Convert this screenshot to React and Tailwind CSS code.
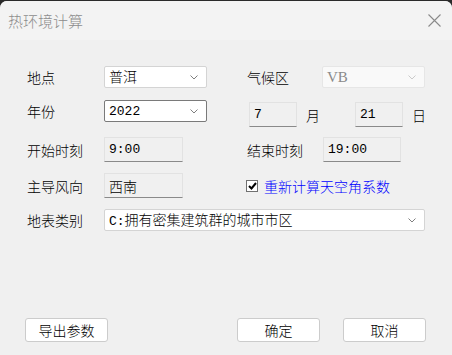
import React from "react";

const mono = { fontFamily: '"Liberation Mono", "Noto Sans CJK SC", monospace' };
const cjk = { fontFamily: '"Noto Sans CJK SC", "Noto Sans", sans-serif', fontWeight: 300 };

const Chevron = ({ color = "#707070" }) => (
  <svg width="8" height="5" viewBox="0 0 8 5" className="shrink-0">
    <path d="M0.5 0.5 L4 4 L7.5 0.5" fill="none" stroke={color} strokeWidth="0.9" />
  </svg>
);

const Combo = ({ value, width, focused, disabled, serif }) => (
  <div
    className={`flex h-[22px] items-center justify-between rounded-[2px] border pl-[4px] pr-[8px] ${
      disabled
        ? "border-[#e6e6e6] bg-[#f9f9f9] text-[#8a8a8a]"
        : focused
        ? "border-[#7a7a7a] bg-white text-black"
        : "border-[#d4d4d4] bg-white text-black"
    }`}
    style={{ width }}
  >
    <span
      className="text-[13px] leading-none"
      style={serif ? { fontFamily: '"Liberation Serif", serif', fontSize: 15 } : mono}
    >
      {value}
    </span>
    <Chevron color={disabled ? "#c4c4c4" : "#707070"} />
  </div>
);

const Field = ({ value, width }) => (
  <div
    className="flex h-[25px] items-center border border-[#e2e2e2] border-b-[#8a8a8a] bg-[#f0f0f0] pl-[4px] text-[13px] leading-none text-black"
    style={{ width, ...mono }}
  >
    {value}
  </div>
);

const Label = ({ children, width }) => (
  <span className="shrink-0 text-[14px] leading-none text-black" style={{ width, ...cjk }}>
    {children}
  </span>
);

const Button = ({ children }) => (
  <button
    className="flex h-[24px] w-[83px] items-center justify-center rounded-[3px] border border-[#cccccc] bg-white text-[14px] leading-none text-black"
    style={cjk}
  >
    {children}
  </button>
);

export default function App() {
  return (
    <div className="h-[355px] w-[452px] overflow-hidden bg-[#2a2a2a]">
      <div className="h-full w-full rounded-t-[7px] bg-[#f0f0f0] mt-[1px]">
        <div className="flex h-[39px] items-center justify-between rounded-t-[7px] bg-[#f3f3f3] pl-[8px] pr-[11px]">
          <span className="text-[15px] leading-none text-[#8c8c8c]" style={cjk}>
            热环境计算
          </span>
          <svg width="13" height="13" viewBox="0 0 13 13">
            <path d="M0.5 0.5 L12.5 12.5 M12.5 0.5 L0.5 12.5" stroke="#8a8a8a" strokeWidth="1.1" fill="none" />
          </svg>
        </div>

        <div className="pl-[27px] pt-[26px]">
          {/* row 1 */}
          <div className="flex h-[22px] items-center">
            <Label width={77}>地点</Label>
            <Combo value={<span style={cjk} className="text-[14px]">普洱</span>} width={103} />
            <div className="w-[40px]" />
            <Label width={75}>气候区</Label>
            <Combo value="VB" width={103} disabled serif />
          </div>

          {/* row 2 */}
          <div className="mt-[12px] flex h-[27px] items-start">
            <div className="flex h-[22px] items-center">
              <Label width={77}>年份</Label>
              <Combo value="2022" width={103} focused />
            </div>
            <div className="ml-[42px] mt-[2px] flex items-center">
              <Field value="7" width={48} />
              <span className="ml-[9px] w-[49px] text-[14px] leading-none" style={cjk}>月</span>
              <Field value="21" width={48} />
              <span className="ml-[9px] text-[14px] leading-none" style={cjk}>日</span>
            </div>
          </div>

          {/* row 3 */}
          <div className="mt-[10px] flex h-[25px] items-center">
            <Label width={77}>开始时刻</Label>
            <Field value="9:00" width={79} />
            <div className="w-[64px]" />
            <Label width={76}>结束时刻</Label>
            <Field value="19:00" width={78} />
          </div>

          {/* row 4 */}
          <div className="mt-[11px] flex h-[25px] items-center">
            <Label width={77}>主导风向</Label>
            <Field value={<span style={cjk} className="text-[14px]">西南</span>} width={79} />
            <div className="w-[63px]" />
            <div className="flex items-center">
              <div className="flex h-[12px] w-[12px] items-center justify-center border border-[#707070] bg-white">
                <svg width="9" height="8" viewBox="0 0 9 8">
                  <path d="M1 4 L3.5 6.5 L8 1" fill="none" stroke="#000" strokeWidth="2" />
                </svg>
              </div>
              <span className="ml-[6px] text-[14px] leading-none text-[#0000ff]" style={cjk}>
                重新计算天空角系数
              </span>
            </div>
          </div>

          {/* row 5 */}
          <div className="mt-[11px] flex h-[22px] items-center">
            <Label width={77}>地表类别</Label>
            <Combo
              value={
                <span>
                  C:<span style={cjk} className="text-[14px]">拥有密集建筑群的城市市区</span>
                </span>
              }
              width={321}
            />
          </div>

          {/* buttons */}
          <div className="mt-[87px] flex items-center pr-[26px]" style={{ marginLeft: -2 }}>
            <Button>导出参数</Button>
            <div className="flex-1" />
            <Button>确定</Button>
            <div className="w-[23px]" />
            <Button>取消</Button>
          </div>
        </div>
      </div>
    </div>
  );
}
